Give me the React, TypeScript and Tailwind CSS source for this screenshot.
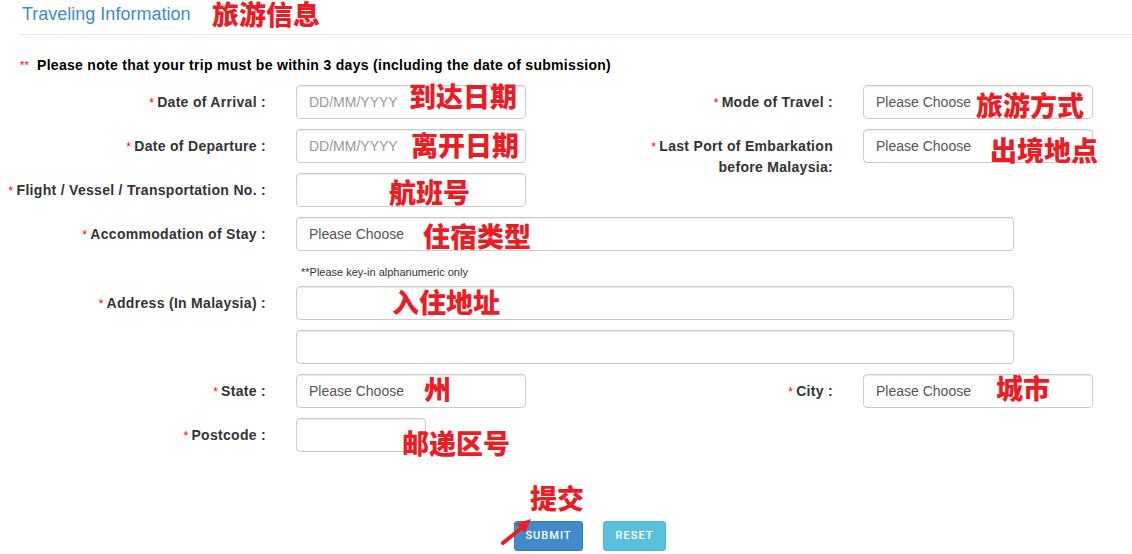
import React from 'react';

const cjk = "font-['Noto_Sans_CJK_SC','Noto_Sans_CJK_TC',sans-serif]";

function Label({ text, width, lines }: { text: string; width: string; lines?: string[] }) {
  return (
    <div className={`${width} shrink-0 pt-[7px] text-right text-[14px] font-bold leading-[20px] tracking-[0.3px] text-[#333]`}>
      <span className="mr-[3px] text-[12px] font-normal text-[#f00]">*</span>
      {lines ? (
        <>
          {lines[0]}
          <br />
          {lines[1]}
        </>
      ) : (
        text
      )}
    </div>
  );
}

function Field({ width, value, placeholder }: { width: string; value?: string; placeholder?: boolean }) {
  return (
    <div
      className={`${width} ml-[30px] flex h-[34px] shrink-0 items-center rounded-[4px] border border-[#ccc] bg-white px-[12px] text-[14px] shadow-[inset_0_1px_1px_rgba(0,0,0,0.075)] ${
        placeholder ? 'text-[#999]' : 'text-[#555]'
      }`}
    >
      {value}
    </div>
  );
}

function Note({ text, className }: { text: string; className: string }) {
  return (
    <div className={`absolute whitespace-nowrap text-[27px] font-black text-[#ec1c24] ${cjk} ${className}`}>
      {text}
    </div>
  );
}

export default function App() {
  return (
    <div className="relative h-[554px] w-[1132px] overflow-hidden bg-white font-['Liberation_Sans',Arial,sans-serif]">
      <div className="ml-[20px] h-[35px] border-b border-[#e5e5e5] pl-[2px] pt-[4px]">
        <h2 className="text-[18px] font-normal leading-[20px] text-[#3c8dc9]">Traveling Information</h2>
      </div>

      <p className="ml-[20px] mt-[22px] flex items-start text-[14px] font-bold leading-[16px] tracking-[0.3px] text-black">
        <span className="w-[17px] text-[11px] font-normal text-[#f00]">**</span>
        Please note that your trip must be within 3 days (including the date of submission)
      </p>

      <div className="mt-[12px] flex h-[34px]">
        <div className="flex w-[526px] shrink-0">
          <Label text="Date of Arrival :" width="w-[266px]" />
          <Field width="w-[230px]" value="DD/MM/YYYY" placeholder />
        </div>
        <Label text="Mode of Travel :" width="w-[307px]" />
        <Field width="w-[230px]" value="Please Choose" />
      </div>

      <div className="mt-[10px] flex h-[34px]">
        <div className="flex w-[526px] shrink-0">
          <Label text="Date of Departure :" width="w-[266px]" />
          <Field width="w-[230px]" value="DD/MM/YYYY" placeholder />
        </div>
        <Label text="" lines={['Last Port of Embarkation', 'before Malaysia:']} width="w-[307px]" />
        <Field width="w-[230px]" value="Please Choose" />
      </div>

      <div className="mt-[10px] flex h-[34px]">
        <Label text="Flight / Vessel / Transportation No. :" width="w-[266px]" />
        <Field width="w-[230px]" />
      </div>

      <div className="mt-[10px] flex h-[34px]">
        <Label text="Accommodation of Stay :" width="w-[266px]" />
        <Field width="w-[718px]" value="Please Choose" />
      </div>

      <p className="ml-[301px] mt-[14px] text-[11px] leading-[14px] text-[#333]">**Please key-in alphanumeric only</p>

      <div className="mt-[7px] flex h-[34px]">
        <Label text="Address (In Malaysia) :" width="w-[266px]" />
        <Field width="w-[718px]" />
      </div>

      <div className="mt-[10px] flex h-[34px]">
        <div className="w-[266px] shrink-0" />
        <Field width="w-[718px]" />
      </div>

      <div className="mt-[10px] flex h-[34px]">
        <div className="flex w-[526px] shrink-0">
          <Label text="State :" width="w-[266px]" />
          <Field width="w-[230px]" value="Please Choose" />
        </div>
        <Label text="City :" width="w-[307px]" />
        <Field width="w-[230px]" value="Please Choose" />
      </div>

      <div className="mt-[10px] flex h-[34px]">
        <Label text="Postcode :" width="w-[266px]" />
        <Field width="w-[130px]" />
      </div>

      <div className="ml-[514px] mt-[69px] flex gap-[20px]">
        <button className="flex h-[30px] w-[69px] items-center justify-center rounded-[3px] border border-[#357ebd] bg-[#428bca] font-['Roboto',sans-serif] text-[11px] font-medium tracking-[1px] text-white">
          SUBMIT
        </button>
        <button className="flex h-[30px] w-[63px] items-center justify-center rounded-[3px] border border-[#46b8da] bg-[#5bc0de] font-['Roboto',sans-serif] text-[11px] font-medium tracking-[1px] text-white">
          RESET
        </button>
      </div>

      {/* red annotations over the form */}
      <Note text="旅游信息" className="left-[212px] top-[0px] leading-[28px]" />
      <Note text="到达日期" className="left-[409px] top-[81px] leading-[30px]" />
      <Note text="离开日期" className="left-[411px] top-[130px] leading-[30px]" />
      <Note text="航班号" className="left-[389px] top-[177px] leading-[30px]" />
      <Note text="住宿类型" className="left-[423px] top-[221px] leading-[30px]" />
      <Note text="入住地址" className="left-[392px] top-[287px] leading-[30px]" />
      <Note text="州" className="left-[424px] top-[374px] leading-[30px]" />
      <Note text="邮递区号" className="left-[402px] top-[428px] leading-[30px]" />
      <Note text="提交" className="left-[530px] top-[483px] leading-[30px]" />
      <Note text="旅游方式" className="left-[976px] top-[90px] leading-[30px]" />
      <Note text="出境地点" className="left-[990px] top-[135px] leading-[30px]" />
      <Note text="城市" className="left-[996px] top-[373px] leading-[30px]" />

      <svg className="absolute left-[498px] top-[514px]" width="40" height="34" viewBox="0 0 40 34">
        <line x1="5" y1="29" x2="26" y2="12" stroke="#ec1c24" strokeWidth="4" strokeLinecap="round" />
        <polygon points="33,5 18,10 27,19" fill="#ec1c24" />
      </svg>
    </div>
  );
}
